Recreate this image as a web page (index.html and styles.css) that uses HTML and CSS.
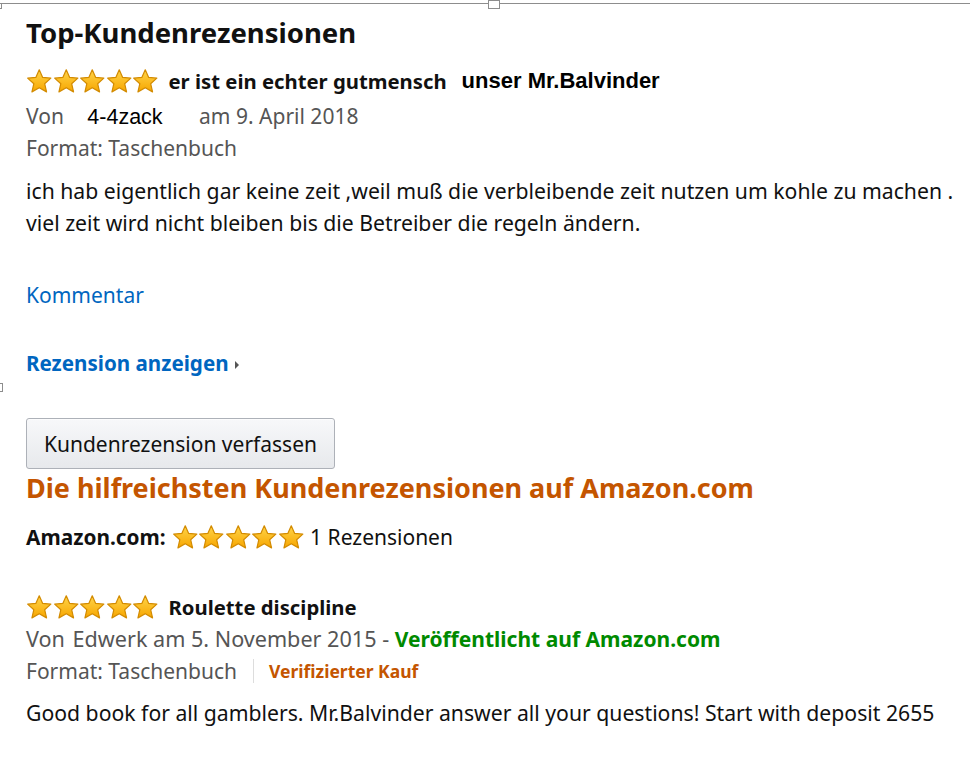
FILE: index.html
```html
<!DOCTYPE html>
<html lang="de">
<head>
    <meta charset="UTF-8">
    <title>Kundenrezensionen</title>
    <link rel="stylesheet" href="styles.css">
</head>
<body>
    <div class="frame-line"></div>
    <div class="handle handle-left"></div>
    <div class="handle handle-mid"></div>
    <div class="handle handle-side"></div>

    <div class="page">
        <h2 class="section-title">Top-Kundenrezensionen</h2>

        <div class="review first">
            <div class="review-head">
                <span class="stars" data-stars="5"></span>
                <span class="review-title">er ist ein echter gutmensch</span>
                <span class="pasted-title">unser Mr.Balvinder</span>
            </div>
            <div class="meta">Von <span class="pasted-author">4-4zack</span> am 9. April 2018</div>
            <div class="meta format">Format: Taschenbuch</div>
            <p class="review-text">ich hab eigentlich gar keine zeit ,weil muß die verbleibende zeit nutzen um kohle zu machen .<br>viel zeit wird nicht bleiben bis die Betreiber die regeln ändern.</p>
            <a class="link comment-link">Kommentar</a>
        </div>

        <a class="link more-link">Rezension anzeigen <span class="caret"></span></a>

        <button class="write-btn">Kundenrezension verfassen</button>

        <h2 class="com-title">Die hilfreichsten Kundenrezensionen auf Amazon.com</h2>
        <div class="com-summary">
            <b>Amazon.com:</b>
            <span class="stars" data-stars="5"></span>
            <span>1 Rezensionen</span>
        </div>

        <div class="review second">
            <div class="review-head">
                <span class="stars" data-stars="5"></span>
                <span class="review-title">Roulette discipline</span>
            </div>
            <div class="meta byline">Von <span class="author">Edwerk</span> am 5. November 2015 - <span class="published">Veröffentlicht auf Amazon.com</span></div>
            <div class="meta format format-row">
                <span>Format: Taschenbuch</span>
                <span class="sep"></span>
                <span class="verified">Verifizierter Kauf</span>
            </div>
            <p class="review-text">Good book for all gamblers. Mr.Balvinder answer all your questions! Start with deposit 2655</p>
        </div>
    </div>

    <script>
        // draw the star rating into every .stars element
        var starPath = 'M12 1.6l3.1 6.9 7.4.7-5.6 5 1.7 7.4L12 17.8l-6.6 3.8 1.7-7.4-5.6-5 7.4-.7z';
        document.querySelectorAll('.stars').forEach(function (el, k) {
            var n = parseInt(el.getAttribute('data-stars'), 10);
            var html = '';
            for (var i = 0; i < n; i++) {
                var id = 'g' + k + '_' + i;
                html += '<svg viewBox="0 0 24 24"><defs><linearGradient id="' + id + '" x1="0" y1="0" x2="0" y2="1">' +
                    '<stop offset="0" stop-color="#ffd54a"/><stop offset="1" stop-color="#f7a600"/></linearGradient></defs>' +
                    '<path d="' + starPath + '" fill="url(#' + id + ')" stroke="#d38b00" stroke-width="1.1" stroke-linejoin="round"/></svg>';
            }
            el.innerHTML = html;
        });
    </script>
</body>
</html>
```

FILE: styles.css
```css
* {
    margin: 0;
    padding: 0;
    box-sizing: border-box;
}

body {
    font-family: "Noto Sans", "Open Sans", sans-serif;
    background: #fff;
    color: #111;
    font-size: 21px;
}

/* selection frame bits along the edges */
.frame-line {
    position: absolute;
    top: 3px;
    left: 0;
    right: 0;
    height: 1px;
    background: #8d8d8d;
}

.handle {
    position: absolute;
    background: #fff;
    border: 1px solid #8d8d8d;
}

.handle-left {
    top: 3px;
    left: -1px;
    width: 3px;
    height: 6px;
}

.handle-mid {
    top: 0;
    left: 488px;
    width: 12px;
    height: 9px;
}

.handle-side {
    top: 383px;
    left: -1px;
    width: 4px;
    height: 9px;
}

.page {
    padding: 15px 0 0 26px;
}

.section-title {
    font-size: 27.5px;
    font-weight: bold;
    line-height: 36px;
    margin-bottom: 15px;
}

.review-head {
    display: flex;
    align-items: center;
    height: 30px;
}

.stars {
    display: inline-flex;
}

.stars svg {
    width: 26.5px;
    height: 26.5px;
    display: block;
}

.review-title {
    font-weight: bold;
    font-size: 20.3px;
    margin-left: 10px;
}

.pasted-title {
    font-family: "Liberation Sans", Arial, sans-serif;
    font-weight: bold;
    font-size: 22px;
    color: #000;
    margin-left: 15px;
}

.meta {
    color: #555;
    line-height: 32px;
}

.meta.format {
    line-height: 30px;
}

.first .review-head {
    margin-bottom: 4px;
}

.second .review-head {
    margin-bottom: 1px;
}

.second .format {
    margin-top: 1px;
}

.pasted-author {
    font-family: "Liberation Sans", Arial, sans-serif;
    font-size: 21.5px;
    color: #000;
    margin: 0 31px 0 18px;
}

.review-text {
    font-size: 21.2px;
    line-height: 32px;
    margin-top: 12px;
}

.second .review-text {
    margin-top: 11px;
}

.link {
    color: #0066c0;
    display: block;
}

.comment-link {
    margin-top: 40px;
    line-height: 32px;
}

.more-link {
    font-weight: bold;
    font-size: 20.6px;
    margin-top: 36px;
    line-height: 32px;
}

.caret {
    display: inline-block;
    width: 0;
    height: 0;
    border-left: 4px solid #555;
    border-top: 4px solid transparent;
    border-bottom: 4px solid transparent;
    vertical-align: middle;
    margin-left: 1px;
}

.write-btn {
    display: block;
    margin-top: 39px;
    width: 309px;
    height: 51px;
    font-family: inherit;
    font-size: 21px;
    color: #111;
    background: linear-gradient(#f7f8fa, #e7e9ec);
    border: 1px solid #adb1b8;
    border-radius: 3px;
    box-shadow: 0 1px 0 rgba(255,255,255,.6) inset;
}

.com-title {
    color: #c45500;
    font-size: 27px;
    font-weight: bold;
    line-height: 38px;
}

.com-summary {
    display: flex;
    align-items: center;
    gap: 6px;
    margin-top: 12px;
    height: 36px;
}

.com-summary b {
    font-size: 20.8px;
}

.review.second {
    margin-top: 37px;
}

.byline {
    font-size: 21.6px;
}

.author {
    margin-left: 2px;
}

.published {
    color: #008a00;
    font-weight: bold;
    font-size: 21px;
}

.format-row {
    display: flex;
    align-items: center;
}

.sep {
    width: 1px;
    height: 24px;
    background: #ddd;
    margin: 0 15px 0 16px;
}

.verified {
    color: #c45500;
    font-weight: bold;
    font-size: 17.5px;
}
```
